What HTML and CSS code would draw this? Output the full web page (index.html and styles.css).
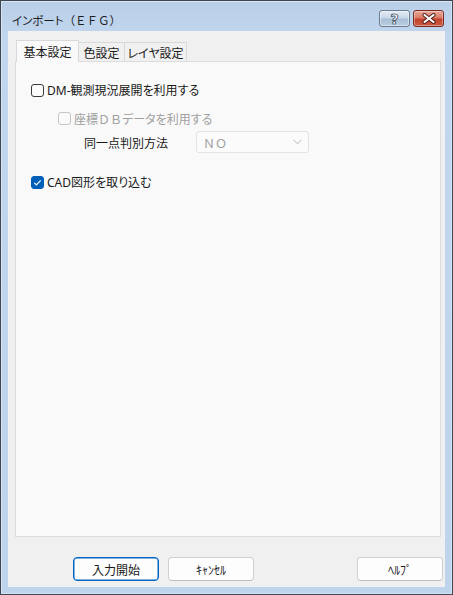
FILE: index.html
```html
<!DOCTYPE html>
<html lang="ja">
<head>
<meta charset="utf-8">
<title>インポート（ＥＦＧ）</title>
<link rel="stylesheet" href="styles.css">
</head>
<body>
<div class="window">
  <div class="titlebar">
    <div class="title"><span class="kana">インポート</span>（ＥＦＧ）</div>
    <div class="caption-buttons">
      <div class="cap-btn help"><span class="qmark">?</span></div>
      <div class="cap-btn close">
        <svg width="14" height="11" viewBox="0 0 14 11">
          <path d="M2.5 2 L11.5 9 M11.5 2 L2.5 9" stroke="#4a1a14" stroke-width="4" stroke-linecap="round"/>
          <path d="M2.5 2 L11.5 9 M11.5 2 L2.5 9" stroke="#ffffff" stroke-width="2.2" stroke-linecap="round"/>
        </svg>
      </div>
    </div>
  </div>
  <div class="client">
    <div class="tabs">
      <div class="tab active">基本設定</div>
      <div class="tab t2">色設定</div>
      <div class="tab t3"><span class="kana">レイヤ</span>設定</div>
    </div>
    <div class="panel">
      <div class="row r1">
        <span class="cb"></span>
        <span class="label"><span class="lat">DM-</span>観測現況展開<span class="kana">を</span>利用<span class="kana">する</span></span>
      </div>
      <div class="row r2 disabled">
        <span class="cb cb-disabled"></span>
        <span class="label">座標ＤＢ<span class="kana">データを</span>利用<span class="kana">する</span></span>
      </div>
      <div class="row r3">
        <span class="field-label">同一点判別方法</span>
        <div class="combo">
          <span class="combo-text">ＮＯ</span>
          <svg class="chev" width="9" height="6" viewBox="0 0 9 6"><path d="M0.5 0.8 L4.5 4.8 L8.5 0.8" fill="none" stroke="#b4b4b4" stroke-width="1"/></svg>
        </div>
      </div>
      <div class="row r4">
        <span class="cb cb-checked">
          <svg width="13" height="13" viewBox="0 0 13 13"><path d="M3.3 6.8 L5.4 8.9 L9.7 4.4" fill="none" stroke="#ffffff" stroke-width="1.2"/></svg>
        </span>
        <span class="label"><span class="lat">CAD</span>図形<span class="kana">を</span>取<span class="kana">り</span>込<span class="kana">む</span></span>
      </div>
    </div>
    <div class="buttons">
      <div class="btn primary">入力開始</div>
      <div class="btn">ｷｬﾝｾﾙ</div>
      <div class="btn help-btn">ﾍﾙﾌﾟ</div>
    </div>
  </div>
</div>
</body>
</html>
```
FILE: styles.css
```css
html, body {
  margin: 0;
  padding: 0;
  background: #ffffff;
}

body {
  font-family: "Noto Sans CJK JP", "Noto Sans", sans-serif;
  font-size: 12px;
  color: #1a1a1a;
}

.kana {
  font-feature-settings: "palt" 1;
}

.lat {
  font-family: "Noto Sans", "Noto Sans CJK JP", sans-serif;
}

.window {
  width: 453px;
  height: 595px;
  box-sizing: border-box;
  border: 1px solid #3f4650;
  background: linear-gradient(#b8cfe8 0px, #c2d7ee 40px, #bed4ec 100%);
  box-shadow: inset 0 0 0 1px #d6e5f5;
  display: flex;
  flex-direction: column;
}

.titlebar {
  height: 30px;
  flex: 0 0 30px;
  display: flex;
  align-items: flex-start;
  padding: 0 8px 0 11px;
}

.title {
  margin-top: 11px;
  line-height: 16px;
  font-size: 11.5px;
  color: #1e1e1e;
  white-space: nowrap;
}

.caption-buttons {
  margin-left: auto;
  margin-top: 9px;
  display: flex;
  gap: 3px;
}

.cap-btn {
  width: 31px;
  height: 17px;
  box-sizing: border-box;
  border-radius: 3px;
  display: flex;
  align-items: center;
  justify-content: center;
}

.help {
  border: 1px solid #6b7c90;
  background: linear-gradient(#e3ecf6 0%, #c9d8e9 45%, #aabfd6 55%, #b9cde2 100%);
  box-shadow: inset 0 0 0 1px rgba(255, 255, 255, 0.45);
}

.qmark {
  font-family: "DejaVu Sans", sans-serif;
  font-weight: bold;
  font-size: 14px;
  line-height: 14px;
  color: #ffffff;
  -webkit-text-stroke: 0.7px #3d4a5a;
  text-shadow: 0 0 1px #3d4a5a;
}

.close {
  border: 1px solid #7a2a1f;
  background: linear-gradient(#e9a99b 0%, #d97a66 45%, #c2412b 55%, #cc5c44 100%);
  box-shadow: inset 0 0 0 1px rgba(255, 255, 255, 0.35);
}

.client {
  flex: 1;
  margin: 0 7px 7px 7px;
  background: #f0f0f0;
  padding: 9px 4px 0 7px;
  display: flex;
  flex-direction: column;
}

.tabs {
  display: flex;
  align-items: flex-end;
  height: 21px;
  margin-left: 1px;
  position: relative;
  z-index: 1;
}

.tab {
  height: 19px;
  box-sizing: border-box;
  border: 1px solid #d9d9d9;
  border-bottom: none;
  background: #f0f0f0;
  display: flex;
  align-items: center;
  justify-content: center;
  white-space: nowrap;
  color: #1a1a1a;
}

.tab.active {
  width: 63px;
  height: 22px;
  margin-bottom: -1px;
  background: #f9f9f9;
  position: relative;
  z-index: 2;
}

.tab.t2 {
  width: 47px;
  margin-left: -1px;
}

.tab.t3 {
  width: 63px;
  margin-left: -1px;
}

.panel {
  height: 476px;
  box-sizing: border-box;
  border: 1px solid #dcdcdc;
  background: #f9f9f9;
  padding-top: 18px;
  display: flex;
  flex-direction: column;
}

.row {
  display: flex;
  align-items: center;
  height: 20px;
  white-space: nowrap;
}

.r1 { margin-left: 15px; }
.r2 { margin-left: 42px; margin-top: 8px; }
.r3 { margin-left: 68px; margin-top: 3px; height: 22px; }
.r4 { margin-left: 15px; margin-top: 19px; }

.cb {
  width: 13px;
  height: 13px;
  box-sizing: border-box;
  border: 1px solid #3a3a3a;
  border-radius: 3px;
  background: #fbfbfb;
  flex: 0 0 13px;
  margin-right: 3px;
  position: relative;
}

.cb-disabled {
  border-color: #c6c6c6;
  background: #fafafa;
}

.cb-checked {
  border-color: #005fb8;
  background: #005fb8;
}

.cb-checked svg {
  position: absolute;
  left: -1px;
  top: -1px;
}

.disabled .label {
  color: #a0a0a0;
}

.field-label {
  width: 112px;
  color: #1a1a1a;
}

.combo {
  width: 113px;
  height: 22px;
  box-sizing: border-box;
  border: 1px solid #e3e3e3;
  border-radius: 3px;
  background: #fbfbfb;
  display: flex;
  align-items: center;
  padding-left: 6px;
  padding-right: 6px;
}

.combo-text {
  color: #9e9e9e;
}

.chev {
  margin-left: auto;
}

.buttons {
  display: flex;
  margin-top: 20px;
  margin-right: -2px;
  padding-left: 58px;
  gap: 9px;
}

.btn {
  width: 86px;
  height: 24px;
  box-sizing: border-box;
  border: 1px solid #d0d0d0;
  border-bottom-color: #bdbdbd;
  border-radius: 4px;
  background: #fdfdfd;
  display: flex;
  align-items: center;
  justify-content: center;
  color: #1a1a1a;
  white-space: nowrap;
}

.btn.primary {
  border: 1px solid #0067c0;
  box-shadow: inset 0 0 0 0.5px #0067c0;
}

.btn.help-btn {
  margin-left: auto;
}
```
